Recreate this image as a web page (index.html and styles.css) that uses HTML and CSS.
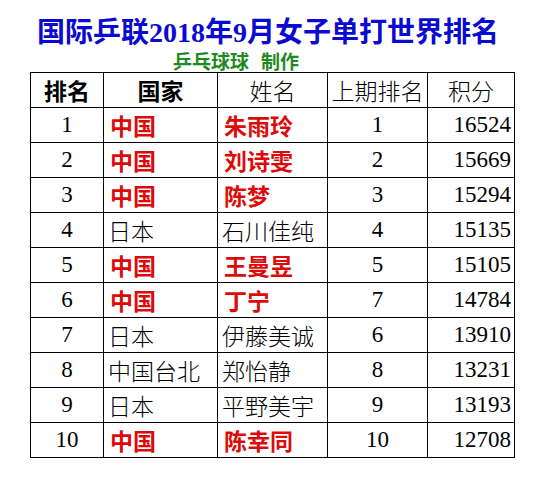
FILE: index.html
```html
<!DOCTYPE html>
<html lang="zh-CN">
<head>
<meta charset="utf-8">
<title>国际乒联2018年9月女子单打世界排名</title>
<link rel="stylesheet" href="styles.css">
</head>
<body>
<div class="page">
  <h1 class="title">国际乒联2018年9月女子单打世界排名</h1>
  <div class="credit"><span>乒乓球球</span><span class="gap">制作</span></div>
  <table class="rank">
    <colgroup>
      <col class="c1"><col class="c2"><col class="c3"><col class="c4"><col class="c5">
    </colgroup>
    <thead>
      <tr>
        <th class="bold">排名</th>
        <th class="bold">国家</th>
        <th>姓名</th>
        <th>上期排名</th>
        <th>积分</th>
      </tr>
    </thead>
    <tbody>
      <tr><td class="num">1</td><td class="red">中国</td><td class="red">朱雨玲</td><td class="num">1</td><td class="pts">16524</td></tr>
      <tr><td class="num">2</td><td class="red">中国</td><td class="red">刘诗雯</td><td class="num">2</td><td class="pts">15669</td></tr>
      <tr><td class="num">3</td><td class="red">中国</td><td class="red">陈梦</td><td class="num">3</td><td class="pts">15294</td></tr>
      <tr><td class="num">4</td><td class="txt">日本</td><td class="txt">石川佳纯</td><td class="num">4</td><td class="pts">15135</td></tr>
      <tr><td class="num">5</td><td class="red">中国</td><td class="red">王曼昱</td><td class="num">5</td><td class="pts">15105</td></tr>
      <tr><td class="num">6</td><td class="red">中国</td><td class="red">丁宁</td><td class="num">7</td><td class="pts">14784</td></tr>
      <tr><td class="num">7</td><td class="txt">日本</td><td class="txt">伊藤美诚</td><td class="num">6</td><td class="pts">13910</td></tr>
      <tr><td class="num">8</td><td class="txt">中国台北</td><td class="txt">郑怡静</td><td class="num">8</td><td class="pts">13231</td></tr>
      <tr><td class="num">9</td><td class="txt">日本</td><td class="txt">平野美宇</td><td class="num">9</td><td class="pts">13193</td></tr>
      <tr><td class="num">10</td><td class="red">中国</td><td class="red">陈幸同</td><td class="num">10</td><td class="pts">12708</td></tr>
    </tbody>
  </table>
</div>
</body>
</html>
```
FILE: styles.css
```css
html, body {
  margin: 0;
  padding: 0;
  background: #ffffff;
}

.page {
  display: flex;
  flex-direction: column;
  padding: 16px 0 0 30px;
  font-family: "Liberation Serif", "Noto Sans CJK SC", serif;
  color: #000;
}

.title {
  margin: 0;
  padding-left: 7px;
  font-size: 28px;
  line-height: 34px;
  height: 34px;
  font-weight: bold;
  color: #0a0ad2;
  white-space: nowrap;
}

.credit {
  display: flex;
  padding-left: 143px;
  font-family: "Noto Sans CJK SC", sans-serif;
  font-size: 19px;
  line-height: 22px;
  height: 22px;
  font-weight: bold;
  color: #1c8a1c;
}

.credit .gap {
  margin-left: 12px;
}

.rank {
  border-collapse: collapse;
  table-layout: fixed;
  width: 484px;
}

.c1 { width: 73px; }
.c2 { width: 114px; }
.c3 { width: 110px; }
.c4 { width: 100px; }
.c5 { width: 87px; }

.rank th,
.rank td {
  border: 1px solid #000;
  height: 34px;
  padding: 0;
  font-size: 23px;
  line-height: 26px;
  white-space: nowrap;
  overflow: hidden;
}

.rank th {
  font-family: "Noto Sans CJK SC", sans-serif;
  font-weight: 300;
  text-align: center;
}

.rank th.bold {
  font-weight: bold;
}

.num {
  text-align: center;
  font-size: 24px;
}

.pts {
  text-align: right;
  padding-right: 3px !important;
  font-size: 24px;
}

.txt {
  font-family: "Noto Sans CJK SC", sans-serif;
  font-weight: 300;
  text-align: left;
  padding-left: 4px !important;
}

.red {
  font-family: "Noto Sans CJK SC", sans-serif;
  font-weight: bold;
  color: #dd0a0a;
  text-align: left;
  padding-left: 6px !important;
}
```
